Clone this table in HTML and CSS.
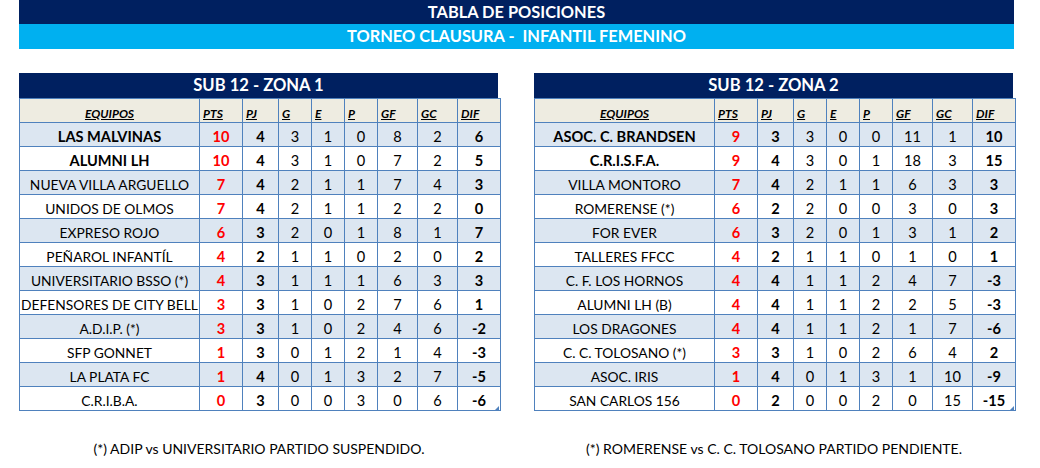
FILE: index.html
```html
<!DOCTYPE html>
<html lang="es">
<head>
<meta charset="utf-8">
<title>Tabla de posiciones</title>
<link rel="stylesheet" href="styles.css">
</head>
<body>
<div class="page">
  <header class="banner">
    <div class="banner-main">TABLA DE POSICIONES</div>
    <div class="banner-sub">TORNEO CLAUSURA -&nbsp; INFANTIL FEMENINO</div>
  </header>

  <div class="zones">
    <section class="zone">
      <div class="zone-title">SUB 12 - ZONA 1</div>
      <div class="table-wrap">
      <table class="standings">
        <colgroup>
          <col class="c-team"><col class="c-pts"><col class="c-pj"><col class="c-g"><col class="c-e"><col class="c-p"><col class="c-gf"><col class="c-gc"><col class="c-dif">
        </colgroup>
        <thead>
          <tr><th class="th-team">EQUIPOS</th><th>PTS</th><th>PJ</th><th>G</th><th>E</th><th>P</th><th>GF</th><th>GC</th><th>DIF</th></tr>
        </thead>
        <tbody>
          <tr class="lead"><td class="team">LAS MALVINAS</td><td class="pts">10</td><td class="b">4</td><td>3</td><td>1</td><td>0</td><td>8</td><td>2</td><td class="b">6</td></tr>
          <tr class="lead"><td class="team">ALUMNI LH</td><td class="pts">10</td><td class="b">4</td><td>3</td><td>1</td><td>0</td><td>7</td><td>2</td><td class="b">5</td></tr>
          <tr><td class="team">NUEVA VILLA ARGUELLO</td><td class="pts">7</td><td class="b">4</td><td>2</td><td>1</td><td>1</td><td>7</td><td>4</td><td class="b">3</td></tr>
          <tr><td class="team">UNIDOS DE OLMOS</td><td class="pts">7</td><td class="b">4</td><td>2</td><td>1</td><td>1</td><td>2</td><td>2</td><td class="b">0</td></tr>
          <tr><td class="team">EXPRESO ROJO</td><td class="pts">6</td><td class="b">3</td><td>2</td><td>0</td><td>1</td><td>8</td><td>1</td><td class="b">7</td></tr>
          <tr><td class="team">PEÑAROL INFANTÍL</td><td class="pts">4</td><td class="b">2</td><td>1</td><td>1</td><td>0</td><td>2</td><td>0</td><td class="b">2</td></tr>
          <tr><td class="team">UNIVERSITARIO BSSO (*)</td><td class="pts">4</td><td class="b">3</td><td>1</td><td>1</td><td>1</td><td>6</td><td>3</td><td class="b">3</td></tr>
          <tr><td class="team">DEFENSORES DE CITY BELL</td><td class="pts">3</td><td class="b">3</td><td>1</td><td>0</td><td>2</td><td>7</td><td>6</td><td class="b">1</td></tr>
          <tr><td class="team">A.D.I.P. (*)</td><td class="pts">3</td><td class="b">3</td><td>1</td><td>0</td><td>2</td><td>4</td><td>6</td><td class="b">-2</td></tr>
          <tr><td class="team">SFP GONNET</td><td class="pts">1</td><td class="b">3</td><td>0</td><td>1</td><td>2</td><td>1</td><td>4</td><td class="b">-3</td></tr>
          <tr><td class="team">LA PLATA FC</td><td class="pts">1</td><td class="b">4</td><td>0</td><td>1</td><td>3</td><td>2</td><td>7</td><td class="b">-5</td></tr>
          <tr><td class="team">C.R.I.B.A.</td><td class="pts">0</td><td class="b">3</td><td>0</td><td>0</td><td>3</td><td>0</td><td>6</td><td class="b">-6</td></tr>
        </tbody>
      </table>
      <span class="corner"></span>
      </div>
      <p class="note">(*) ADIP vs UNIVERSITARIO PARTIDO SUSPENDIDO.</p>
    </section>

    <section class="zone">
      <div class="zone-title">SUB 12 - ZONA 2</div>
      <div class="table-wrap">
      <table class="standings">
        <colgroup>
          <col class="c-team"><col class="c-pts"><col class="c-pj"><col class="c-g"><col class="c-e"><col class="c-p"><col class="c-gf"><col class="c-gc"><col class="c-dif">
        </colgroup>
        <thead>
          <tr><th class="th-team">EQUIPOS</th><th>PTS</th><th>PJ</th><th>G</th><th>E</th><th>P</th><th>GF</th><th>GC</th><th>DIF</th></tr>
        </thead>
        <tbody>
          <tr class="lead"><td class="team">ASOC. C. BRANDSEN</td><td class="pts">9</td><td class="b">3</td><td>3</td><td>0</td><td>0</td><td>11</td><td>1</td><td class="b">10</td></tr>
          <tr class="lead"><td class="team">C.R.I.S.F.A.</td><td class="pts">9</td><td class="b">4</td><td>3</td><td>0</td><td>1</td><td>18</td><td>3</td><td class="b">15</td></tr>
          <tr><td class="team">VILLA MONTORO</td><td class="pts">7</td><td class="b">4</td><td>2</td><td>1</td><td>1</td><td>6</td><td>3</td><td class="b">3</td></tr>
          <tr><td class="team">ROMERENSE (*)</td><td class="pts">6</td><td class="b">2</td><td>2</td><td>0</td><td>0</td><td>3</td><td>0</td><td class="b">3</td></tr>
          <tr><td class="team">FOR EVER</td><td class="pts">6</td><td class="b">3</td><td>2</td><td>0</td><td>1</td><td>3</td><td>1</td><td class="b">2</td></tr>
          <tr><td class="team">TALLERES FFCC</td><td class="pts">4</td><td class="b">2</td><td>1</td><td>1</td><td>0</td><td>1</td><td>0</td><td class="b">1</td></tr>
          <tr><td class="team">C. F. LOS HORNOS</td><td class="pts">4</td><td class="b">4</td><td>1</td><td>1</td><td>2</td><td>4</td><td>7</td><td class="b">-3</td></tr>
          <tr><td class="team">ALUMNI LH (B)</td><td class="pts">4</td><td class="b">4</td><td>1</td><td>1</td><td>2</td><td>2</td><td>5</td><td class="b">-3</td></tr>
          <tr><td class="team">LOS DRAGONES</td><td class="pts">4</td><td class="b">4</td><td>1</td><td>1</td><td>2</td><td>1</td><td>7</td><td class="b">-6</td></tr>
          <tr><td class="team">C. C. TOLOSANO (*)</td><td class="pts">3</td><td class="b">3</td><td>1</td><td>0</td><td>2</td><td>6</td><td>4</td><td class="b">2</td></tr>
          <tr><td class="team">ASOC. IRIS</td><td class="pts">1</td><td class="b">4</td><td>0</td><td>1</td><td>3</td><td>1</td><td>10</td><td class="b">-9</td></tr>
          <tr><td class="team">SAN CARLOS 156</td><td class="pts">0</td><td class="b">2</td><td>0</td><td>0</td><td>2</td><td>0</td><td>15</td><td class="b">-15</td></tr>
        </tbody>
      </table>
      <span class="corner"></span>
      </div>
      <p class="note">(*) ROMERENSE vs C. C. TOLOSANO PARTIDO PENDIENTE.</p>
    </section>
  </div>
</div>
</body>
</html>
```

FILE: styles.css
```css
* { box-sizing: border-box; }

html, body {
  margin: 0;
  padding: 0;
  background: #ffffff;
}

body {
  font-family: Lato, "Liberation Sans", sans-serif;
  color: #000000;
}

.page {
  width: 1040px;
  padding-left: 19px;
}

.banner {
  width: 995px;
}

.banner-main,
.banner-sub {
  height: 24px;
  line-height: 24px;
  text-align: center;
  color: #ffffff;
  font-weight: 700;
  font-size: 16.4px;
}

.banner-main {
  background: #002060;
}

.banner-sub {
  background: #00b0f0;
  height: 25px;
  white-space: pre;
}

.zones {
  display: flex;
  gap: 35px;
  margin-top: 24px;
}

.zone {
  width: 480px;
}

.zone-title {
  width: 479px;
  height: 25px;
  line-height: 25px;
  background: #002060;
  color: #ffffff;
  font-weight: 700;
  font-size: 16.6px;
  text-align: center;
}

.table-wrap {
  position: relative;
  width: 481px;
}

.standings {
  width: 481px;
  border-collapse: collapse;
  table-layout: fixed;
}

.c-team { width: 180px; }
.c-pts { width: 43px; }
.c-pj { width: 36px; }
.c-g, .c-e, .c-p { width: 33px; }
.c-gf, .c-gc { width: 40px; }
.c-dif { width: 43px; }

.standings th,
.standings td {
  border: 1px solid #4f81bd;
  height: 24px;
  padding: 0;
}

.standings th {
  background: #eeece1;
  font-size: 12px;
  font-style: italic;
  font-weight: 700;
  text-decoration: underline;
  text-align: left;
  padding: 7px 0 0 3px;
  line-height: 16px;
}

.standings th.th-team {
  text-align: center;
  padding-left: 0;
}

.standings td {
  font-size: 14.6px;
  text-align: center;
  line-height: 19px;
  padding-top: 4px;
}

.standings tbody tr:nth-child(odd) td {
  background: #dce6f1;
}

.standings tbody tr:nth-child(even) td {
  background: #ffffff;
}

.standings td.team {
  white-space: nowrap;
  font-size: 13.8px;
}

.standings tr.lead td.team {
  font-weight: 700;
  font-size: 14.6px;
}

.standings td.pts {
  color: #ff0000;
  font-weight: 700;
}

.standings td.b {
  font-weight: 700;
}

.corner {
  position: absolute;
  right: 1px;
  bottom: 1px;
  width: 0;
  height: 0;
  border-left: 4px solid transparent;
  border-bottom: 4px solid #4f81bd;
}

.note {
  margin: 28px 0 0;
  text-align: center;
  font-size: 14px;
  line-height: 20px;
}
```
